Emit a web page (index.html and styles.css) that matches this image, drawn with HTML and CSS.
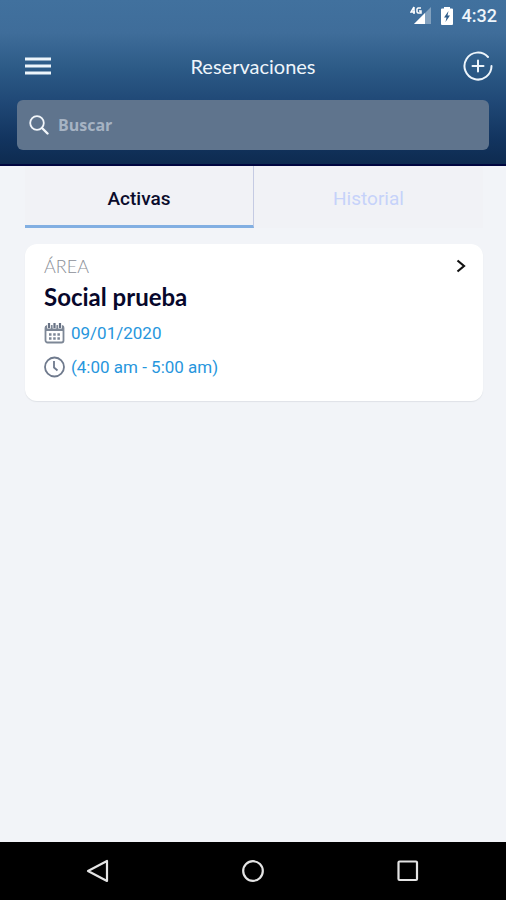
FILE: index.html
```html
<!DOCTYPE html>
<html lang="es">
<head>
<meta charset="utf-8">
<meta name="viewport" content="width=device-width, initial-scale=1">
<title>Reservaciones</title>
<link rel="stylesheet" href="styles.css">
</head>
<body>
<header class="header">
  <div class="status">
    <svg width="22" height="20" viewBox="0 0 22 20" aria-hidden="true">
      <path d="M21 1v17H4z" fill="#fff" opacity=".35"/>
      <path d="M15 7v11H4z" fill="#fff"/>
      <path d="M4 1L1 6h4M4 1v7M11 2H8L7 3v3l1 1h3V5H9" fill="none" stroke="#fff" stroke-width="1.500"/>
    </svg>
    <svg width="12" height="18" viewBox="0 0 12 18" aria-hidden="true">
      <path d="M3 0h6v1.500H11q1 0 1 1V17q0 1-1 1H1q-1 0-1-1V2.500q0-1 1-1h2z" fill="#fff"/>
      <path d="M7.500 4L3 10.500h2.500L4.500 15 9 8.500H6.500z" fill="#2f5d8b"/>
    </svg>
    <span class="time">4:32</span>
  </div>
  <div class="bar">
    <button class="icon-button" type="button" aria-label="Menú">
      <svg width="26" height="18" viewBox="0 0 26 18"><path d="M0 2h26M0 9h26M0 16h26" stroke="#edf5fb" stroke-width="3"/></svg>
    </button>
    <h1 class="title">Reservaciones</h1>
    <button class="icon-button add" type="button" aria-label="Agregar">
      <svg width="30" height="30" viewBox="0 0 30 30" fill="none" stroke="#eef5fb" stroke-width="2" stroke-linecap="round"><path d="M25 6A13.500 13.500 0 1 0 28.500 15M15 9.500v11M9.500 15h11"/></svg>
    </button>
  </div>
  <label class="search">
    <svg width="20" height="20" viewBox="0 0 20 20" fill="none" stroke="#f2f6fa" stroke-linecap="round" aria-hidden="true"><circle cx="8" cy="8" r="6.800" stroke-width="1.800"/><path d="M13 13l5.500 5.500" stroke-width="2.400"/></svg>
    <input class="search-input" type="search" placeholder="Buscar" aria-label="Buscar">
  </label>
</header>
<main class="content">
  <nav class="tabs">
    <button class="tab tab-active" type="button">Activas</button>
    <button class="tab" type="button">Historial</button>
  </nav>
  <article class="card">
    <div class="details">
      <p class="label">ÁREA</p>
      <h2 class="name">Social prueba</h2>
      <p class="row">
        <svg width="21" height="22" viewBox="0 0 21 22" aria-hidden="true">
          <path d="M1 4h19v5H1z" fill="#7d8796"/>
          <rect x="1.500" y="4" width="18" height="16.500" rx="2" fill="none" stroke="#7d8796" stroke-width="1.800"/>
          <path d="M5 1v5.500M10.500 1v5.500M16 1v5.500" stroke="#fff" stroke-width="3.800"/>
          <path d="M5 1v5M10.500 1v5M16 1v5" stroke="#667184" stroke-width="2.200"/>
          <path d="M5 12.500h12M5 16.500h12" stroke="#7d8796" stroke-width="2.500" stroke-dasharray="2.500 1.700"/>
        </svg>
        <span>09/01/2020</span>
      </p>
      <p class="row">
        <svg width="21" height="22" viewBox="0 0 21 22" fill="none" stroke="#6f7a8d" aria-hidden="true"><circle cx="10.500" cy="11" r="9.500" stroke-width="1.800"/><path d="M10 5v6.500l3.500 3" stroke-width="1.800"/></svg>
        <span>(4:00 am - 5:00 am)</span>
      </p>
    </div>
    <svg width="10" height="14" viewBox="0 0 10 14" fill="none" stroke="#111" stroke-width="2.200" aria-hidden="true"><path d="M1.500 1.500L8 7l-6.500 5.500"/></svg>
  </article>
</main>
<footer class="system-nav">
  <button class="icon-button" type="button" aria-label="Atrás"><svg width="24" height="24" viewBox="0 0 24 24" fill="none" stroke="#e4e4e4" stroke-width="2.200" stroke-linejoin="round"><path d="M21 2v20L2 12z"/></svg></button>
  <button class="icon-button" type="button" aria-label="Inicio"><svg width="24" height="24" viewBox="0 0 24 24" fill="none" stroke="#e4e4e4" stroke-width="2.200"><circle cx="12" cy="12" r="9.800"/></svg></button>
  <button class="icon-button" type="button" aria-label="Recientes"><svg width="24" height="24" viewBox="0 0 24 24" fill="none" stroke="#e4e4e4" stroke-width="2.200"><rect x="2.500" y="2.500" width="18.500" height="18.500" rx="1"/></svg></button>
</footer>
</body>
</html>
```
FILE: styles.css
```css
* {
  box-sizing: border-box;
}

body {
  margin: 0;
  min-height: 100vh;
  display: flex;
  flex-direction: column;
  background: #f2f4f8;
  font-family: Lato, sans-serif;
}

h1, h2, p {
  margin: 0;
}

button {
  padding: 0;
  border: 0;
  background: none;
  font: inherit;
}

svg {
  display: block;
  flex: none;
}

.header {
  padding-bottom: 14px;
  border-bottom: 2px solid #00063f;
  background: linear-gradient(#41719e 0%, #3f6d9a 20%, #2c5a86 42%, #214a78 60%, #12345f 85%, #0e2b50 100%);
  color: #eef5fb;
}

.status {
  display: flex;
  align-items: center;
  justify-content: flex-end;
  gap: 9px;
  height: 32px;
  padding-right: 9px;
}

.time {
  font: 500 18px/20px Roboto, sans-serif;
}

.bar {
  display: grid;
  grid-template-columns: 30px 1fr 42px;
  align-items: center;
  height: 68px;
  padding: 0 13px 0 25px;
}

.add {
  justify-self: end;
}

.title {
  font-size: 20px;
  font-weight: 400;
  line-height: 24px;
  text-align: center;
}

.search {
  display: flex;
  align-items: center;
  gap: 9px;
  height: 50px;
  margin: 0 17px;
  padding: 0 12px;
  border-radius: 6px;
  background: #5f748d;
}

.search-input {
  flex: 1;
  min-width: 0;
  padding: 0;
  border: 0;
  outline: 0;
  background: none;
  color: #fff;
  font: 700 16px/24px "Open Sans", sans-serif;
}

.search-input::placeholder {
  color: #a6b3c3;
  opacity: 1;
}

.content {
  flex: 1;
  padding: 0 23px 0 25px;
}

.tabs {
  display: grid;
  grid-template-columns: 1fr 1fr;
  height: 62px;
  background: #f1f2f6;
}

.tab {
  padding-top: 6px;
  border-bottom: 3px solid transparent;
  color: #c6d2fa;
  font: 400 19px/24px Roboto, sans-serif;
}

.tab-active {
  border-right: 1px solid #c5cbe3;
  border-bottom-color: #82afe2;
  color: #0b0c2c;
  font-weight: 500;
}

.card {
  display: flex;
  justify-content: space-between;
  margin-top: 16px;
  padding: 10px 17px 22px 19px;
  border-radius: 12px;
  background: #fff;
  box-shadow: 0 1px 1px #dfe2e7;
}

.card > svg {
  margin-top: 5px;
}

.label {
  color: #8b8f98;
  font-size: 18px;
  font-weight: 300;
  line-height: 24px;
}

.name {
  margin-bottom: 5px;
  color: #07072b;
  font-size: 24px;
  font-weight: 700;
  line-height: 38px;
}

.row {
  display: flex;
  align-items: center;
  gap: 6px;
  height: 24px;
  color: #2796dd;
  font: 400 17px/24px Roboto, sans-serif;
}

.row + .row {
  margin-top: 10px;
}

.system-nav {
  display: flex;
  align-items: center;
  justify-content: space-between;
  height: 58px;
  padding: 0 86px;
  background: #000;
}
```
